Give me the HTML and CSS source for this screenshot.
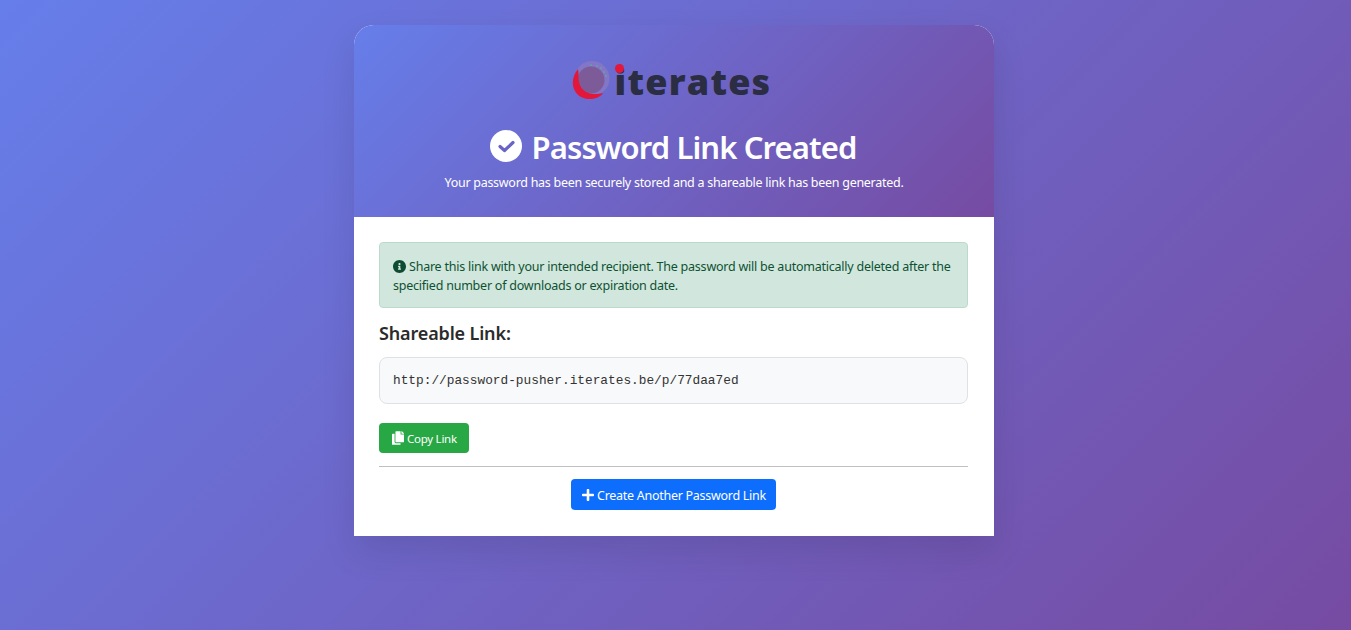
FILE: index.html
```html
<!DOCTYPE html>
<html lang="en">
<head>
  <meta charset="UTF-8" />
  <meta name="viewport" content="width=device-width, initial-scale=1" />
  <title>Password Link Created</title>
  <link rel="stylesheet" href="styles.css">
</head>
<body>
  <div class="card">
    <div class="card-header">
      <div class="logo">
        <svg class="logo-mark" width="40" height="40" viewBox="0 0 40 40">
          <circle cx="21" cy="18.500" r="17.500" fill="#8276c6"/>
          <circle cx="20" cy="20" r="13.500" fill="#7d5a98"/>
          <path d="M7 9 C-2 20 1 35 14 38.500 C22 40.500 30 37 32 33 C22 36 10 33 8 22 C7 17 8 13 7 9 Z" fill="#e3173a"/>
          <circle cx="26" cy="6" r="0.700" fill="#4ec98a"/>
          <circle cx="30" cy="8" r="0.700" fill="#4ec98a"/>
          <circle cx="33" cy="12" r="0.700" fill="#4ec98a"/>
          <circle cx="35" cy="16" r="0.700" fill="#4ec98a"/>
          <circle cx="20" cy="5" r="0.700" fill="#4ec98a"/>
        </svg>
        <span class="logo-text">iterates</span>
        <span class="logo-dot"></span>
      </div>
      <h1>
        <svg class="check-icon" width="32" height="32" viewBox="0 0 32 32">
          <circle cx="16" cy="16" r="16" fill="#fff"/>
          <polyline points="10,16.500 14.500,20.500 23,12.500" fill="none" stroke="#6a64c6" stroke-width="3.200" stroke-linecap="round" stroke-linejoin="round"/>
        </svg>
        Password Link Created
      </h1>
      <p class="subtitle">Your password has been securely stored and a shareable link has been generated.</p>
    </div>

    <div class="card-body">
      <div class="alert">
        <svg class="info-icon" width="13" height="13" viewBox="8 8 496 496">
          <path fill="#0f4a33" d="M256 8C119.043 8 8 119.083 8 256c0 136.997 111.043 248 248 248s248-111.003 248-248C504 119.083 392.957 8 256 8zm0 110c23.196 0 42 18.804 42 42s-18.804 42-42 42-42-18.804-42-42 18.804-42 42-42zm56 254c0 6.627-5.373 12-12 12h-88c-6.627 0-12-5.373-12-12v-24c0-6.627 5.373-12 12-12h12v-64h-12c-6.627 0-12-5.373-12-12v-24c0-6.627 5.373-12 12-12h64c6.627 0 12 5.373 12 12v100h12c6.627 0 12 5.373 12 12v24z"/>
        </svg>
        Share this link with your intended recipient. The password will be automatically deleted after the specified number of downloads or expiration date.
      </div>

      <h2>Shareable Link:</h2>
      <div class="link-box">http://password-pusher.iterates.be/p/77daa7ed</div>

      <button class="btn btn-copy">
        <svg width="12" height="14" viewBox="0 0 448 512">
          <path fill="#fff" d="M320 448v40c0 13.255-10.745 24-24 24H24c-13.255 0-24-10.745-24-24V120c0-13.255 10.745-24 24-24h72v296c0 30.879 25.121 56 56 56h168zm0-344V0H152c-13.255 0-24 10.745-24 24v368c0 13.255 10.745 24 24 24h272c13.255 0 24-10.745 24-24V128H344c-13.200 0-24-10.800-24-24zm120.971-31.029L375.029 7.029A24 24 0 0 0 358.059 0H352v96h96v-6.059a24 24 0 0 0-7.029-16.970z"/>
        </svg>
        Copy Link
      </button>

      <hr />

      <div class="actions">
        <button class="btn btn-create">
          <svg width="12" height="14" viewBox="0 0 448 512">
            <path fill="#fff" d="M416 208H272V64c0-17.670-14.330-32-32-32h-32c-17.670 0-32 14.330-32 32v144H32c-17.670 0-32 14.330-32 32v32c0 17.670 14.330 32 32 32h144v144c0 17.670 14.330 32 32 32h32c17.670 0 32-14.330 32-32V304h144c17.670 0 32-14.330 32-32v-32c0-17.670-14.330-32-32-32z"/>
          </svg>
          Create Another Password Link
        </button>
      </div>
    </div>
  </div>
</body>
</html>
```

FILE: styles.css
```css
* {
  box-sizing: border-box;
  font-family: 'Noto Sans', 'Open Sans', sans-serif;
}

html {
  height: 100%;
}

body {
  margin: 0;
  min-height: 100%;
  padding: 25px 3px 0 0;
  background: linear-gradient(135deg, #667eea 0%, #764ba2 100%);
  display: flex;
  justify-content: center;
  align-items: flex-start;
}

.card {
  width: 640px;
  background-color: #fff;
  border-radius: 20px 20px 0 0;
  box-shadow: 0 15px 35px rgba(0, 0, 0, 0.1);
}

.card-header {
  height: 192px;
  padding: 33px 30px 0;
  border-radius: 20px 20px 0 0;
  background: linear-gradient(135deg, #667eea 0%, #764ba2 100%);
  color: #fff;
  text-align: center;
}

.logo {
  display: flex;
  justify-content: center;
  align-items: center;
  height: 48px;
  padding-right: 6px;
  position: relative;
}

.logo-mark {
  flex: none;
  margin-top: -4px;
}

.logo-dot {
  position: absolute;
  left: 231px;
  top: 6px;
  width: 9px;
  height: 9px;
  border-radius: 50%;
  background-color: #e3173a;
}

.logo-text {
  margin-left: 4px;
  font-family: 'Open Sans', sans-serif;
  font-size: 36px;
  font-weight: 800;
  letter-spacing: 1.200px;
  line-height: 48px;
  color: #2b2d42;
}

h1 {
  margin: 22px 0 0;
  padding-right: 2px;
  font-size: 31px;
  font-weight: 600;
  letter-spacing: -0.900px;
  line-height: 38px;
  display: flex;
  justify-content: center;
  align-items: center;
  gap: 10px;
}

.check-icon {
  margin-bottom: 2px;
}

.subtitle {
  margin: 7px 0 0;
  font-size: 12.500px;
  letter-spacing: -0.280px;
  line-height: 20px;
}

.card-body {
  padding: 25px 26px 26px 25px;
  color: #2b2b2b;
}

.alert {
  height: 66px;
  padding: 14px 13px 0;
  background-color: #d1e7dd;
  border: 1px solid #badbcc;
  border-radius: 4px;
  color: #0f5132;
  font-size: 12.500px;
  letter-spacing: -0.230px;
  line-height: 19px;
}

.info-icon {
  vertical-align: -2px;
}

h2 {
  margin: 13px 0 0;
  font-size: 18px;
  font-weight: 600;
  letter-spacing: -0.150px;
  line-height: 24px;
}

.link-box {
  margin-top: 12px;
  height: 47px;
  padding: 0 13px;
  display: flex;
  align-items: center;
  background-color: #f8f9fa;
  border: 1px solid #dee2e6;
  border-radius: 8px;
  color: #333;
  font-family: 'Liberation Mono', monospace;
  font-size: 12.800px;
}

.btn {
  display: inline-flex;
  align-items: center;
  gap: 3px;
  border: none;
  border-radius: 4px;
  color: #fff;
  cursor: pointer;
}

.btn-copy {
  margin-top: 19px;
  height: 30px;
  padding: 0 12px 0 13px;
  background-color: #28a745;
  font-size: 11.500px;
  letter-spacing: -0.260px;
}

hr {
  margin: 13px 0 0;
  border: 0;
  border-top: 1px solid #bfbfbf;
}

.actions {
  margin-top: 12px;
  display: flex;
  justify-content: center;
}

.btn-create {
  height: 31px;
  padding: 1px 10px 0 11px;
  background-color: #0d6efd;
  font-size: 12.500px;
  letter-spacing: -0.280px;
}
```
